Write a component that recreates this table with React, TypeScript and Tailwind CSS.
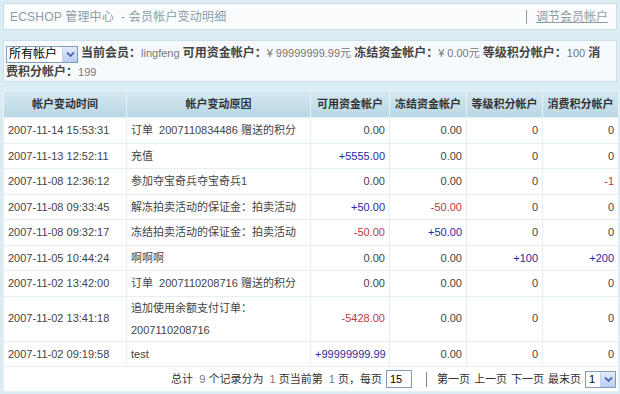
import React from 'react';

type Row = {
  time: string;
  reason: string;
  money: string;
  frozen: string;
  rank: string;
  pay: string;
  tall?: boolean;
};

const rows: Row[] = [
  { time: '2007-11-14 15:53:31', reason: '订单  2007110834486 赠送的积分', money: '0.00', frozen: '0.00', rank: '0', pay: '0' },
  { time: '2007-11-13 12:52:11', reason: '充值', money: '+5555.00', frozen: '0.00', rank: '0', pay: '0' },
  { time: '2007-11-08 12:36:12', reason: '参加夺宝奇兵夺宝奇兵1', money: '0.00', frozen: '0.00', rank: '0', pay: '-1' },
  { time: '2007-11-08 09:33:45', reason: '解冻拍卖活动的保证金：拍卖活动', money: '+50.00', frozen: '-50.00', rank: '0', pay: '0' },
  { time: '2007-11-08 09:32:17', reason: '冻结拍卖活动的保证金：拍卖活动', money: '-50.00', frozen: '+50.00', rank: '0', pay: '0' },
  { time: '2007-11-05 10:44:24', reason: '啊啊啊', money: '0.00', frozen: '0.00', rank: '+100', pay: '+200' },
  { time: '2007-11-02 13:42:00', reason: '订单  2007110208716 赠送的积分', money: '0.00', frozen: '0.00', rank: '0', pay: '0' },
  { time: '2007-11-02 13:41:18', reason: '追加使用余额支付订单：\n2007110208716', money: '-5428.00', frozen: '0.00', rank: '0', pay: '0', tall: true },
  { time: '2007-11-02 09:19:58', reason: 'test', money: '+99999999.99', frozen: '0.00', rank: '0', pay: '0' },
];

function numColor(v: string) {
  if (v.startsWith('+')) return 'text-[#2a2a9c]';
  if (v.startsWith('-')) return 'text-[#c0393b]';
  return 'text-[#444]';
}

function Chevron() {
  return (
    <span className="flex h-full w-[15px] items-center justify-center border-l border-[#c6d3ec] bg-gradient-to-b from-[#e4ecfb] to-[#b9cdf3]">
      <svg width="9" height="7" viewBox="0 0 9 7">
        <path d="M1 1.5 L4.5 5 L8 1.5" fill="none" stroke="#4d6aa8" strokeWidth="1.8" />
      </svg>
    </span>
  );
}

export default function App() {
  const font = "font-['Liberation_Sans','Noto_Sans_CJK_SC',sans-serif]";
  const cell = 'border border-[#e6f0f4] px-[4px]';
  return (
    <div className={`${font} h-[394px] w-[620px] overflow-hidden bg-[#dcecf3] px-[3px] pt-[3px] text-[11px] text-[#444]`}>
      <div className="flex h-[27px] items-center justify-between border border-[#c9e0ea] bg-[#fafcfd] pl-[6px] pr-[8px]">
        <span className="text-[12px] tracking-[0.2px] text-[#8e9da4]">ECSHOP 管理中心 &nbsp;- 会员帐户变动明细</span>
        <span className="flex items-center gap-[9px] text-[12px] text-[#8d9ba2]">
          <span className="h-[14px] w-px bg-[#8d9ba2]" />
          <span className="underline">调节会员帐户</span>
        </span>
      </div>

      <div className="mt-[10px] h-[42px] border border-[#c9e0ea] bg-[#f6fafc] px-[2px] pt-[3px] leading-[18px]">
        <span className="mr-[3px] inline-flex h-[17px] w-[72px] items-stretch border border-[#7f9db9] bg-white align-middle">
          <span className="flex-1 pl-[2px] text-[12px] leading-[15px] text-black">所有帐户</span>
          <Chevron />
        </span>
        <b className="text-[12px] text-[#444]">当前会员：</b>
        <span className="text-[#777]">lingfeng</span> <b className="text-[12px] text-[#444]">可用资金帐户：</b>
        <span className="text-[#777]">¥ 99999999.99元</span> <b className="text-[12px] text-[#444]">冻结资金帐户：</b>
        <span className="text-[#777]">¥ 0.00元</span> <b className="text-[12px] text-[#444]">等级积分帐户：</b>
        <span className="text-[#777]">100</span> <b className="text-[12px] text-[#444]">消</b>
        <br />
        <b className="text-[12px] text-[#444]">费积分帐户：</b>
        <span className="text-[#777]">199</span>
      </div>

      <table className="mt-[8px] w-[615px] table-fixed border-collapse border border-[#c3dde9] bg-white">
        <colgroup>
          <col className="w-[123px]" />
          <col className="w-[184px]" />
          <col className="w-[79px]" />
          <col className="w-[77px]" />
          <col className="w-[76px]" />
          <col className="w-[76px]" />
        </colgroup>
        <thead>
          <tr className="h-[27px] bg-gradient-to-b from-[#d4e8f1] to-[#b9d7e5]">
            {['帐户变动时间', '帐户变动原因', '可用资金帐户', '冻结资金帐户', '等级积分帐户', '消费积分帐户'].map((h) => (
              <th key={h} className="whitespace-nowrap border border-[#e8f3f8] px-0 text-center text-[11px] font-bold text-[#333]">
                {h}
              </th>
            ))}
          </tr>
        </thead>
        <tbody>
          {rows.map((r) => (
            <tr key={r.time} className={r.tall ? 'h-[45px]' : 'h-[25.5px]'}>
              <td className={`${cell} whitespace-nowrap`}>{r.time}</td>
              <td className={`${cell} whitespace-pre-wrap leading-[22px]`}>{r.reason}</td>
              <td className={`${cell} text-right ${numColor(r.money)}`}>{r.money}</td>
              <td className={`${cell} text-right ${numColor(r.frozen)}`}>{r.frozen}</td>
              <td className={`${cell} text-right ${numColor(r.rank)}`}>{r.rank}</td>
              <td className={`${cell} text-right ${numColor(r.pay)}`}>{r.pay}</td>
            </tr>
          ))}
          <tr className="h-[25px]">
            <td colSpan={6} className="border border-[#e6f0f4] px-[2px]">
              <div className="flex items-center justify-end whitespace-pre text-[#333]">
                <span>
                  总计  <span className="text-[#777]">9</span> 个记录分为  <span className="text-[#777]">1</span> 页当前第  <span className="text-[#777]">1</span> 页，每页
                </span>
                <span className="ml-[4px] flex h-[18px] w-[26px] items-center border border-[#7f9db9] bg-white pl-[3px] text-[11px] text-black">
                  15
                </span>
                <span className="ml-[14px] mr-[10px] h-[15px] w-px bg-[#888]" />
                <span className="flex gap-[4px]">
                  <span>第一页</span>
                  <span>上一页</span>
                  <span>下一页</span>
                  <span>最末页</span>
                </span>
                <span className="ml-[4px] flex h-[17px] w-[31px] items-stretch border border-[#7f9db9] bg-white">
                  <span className="flex-1 pl-[3px] text-[11px] leading-[15px] text-black">1</span>
                  <Chevron />
                </span>
              </div>
            </td>
          </tr>
        </tbody>
      </table>
    </div>
  );
}
